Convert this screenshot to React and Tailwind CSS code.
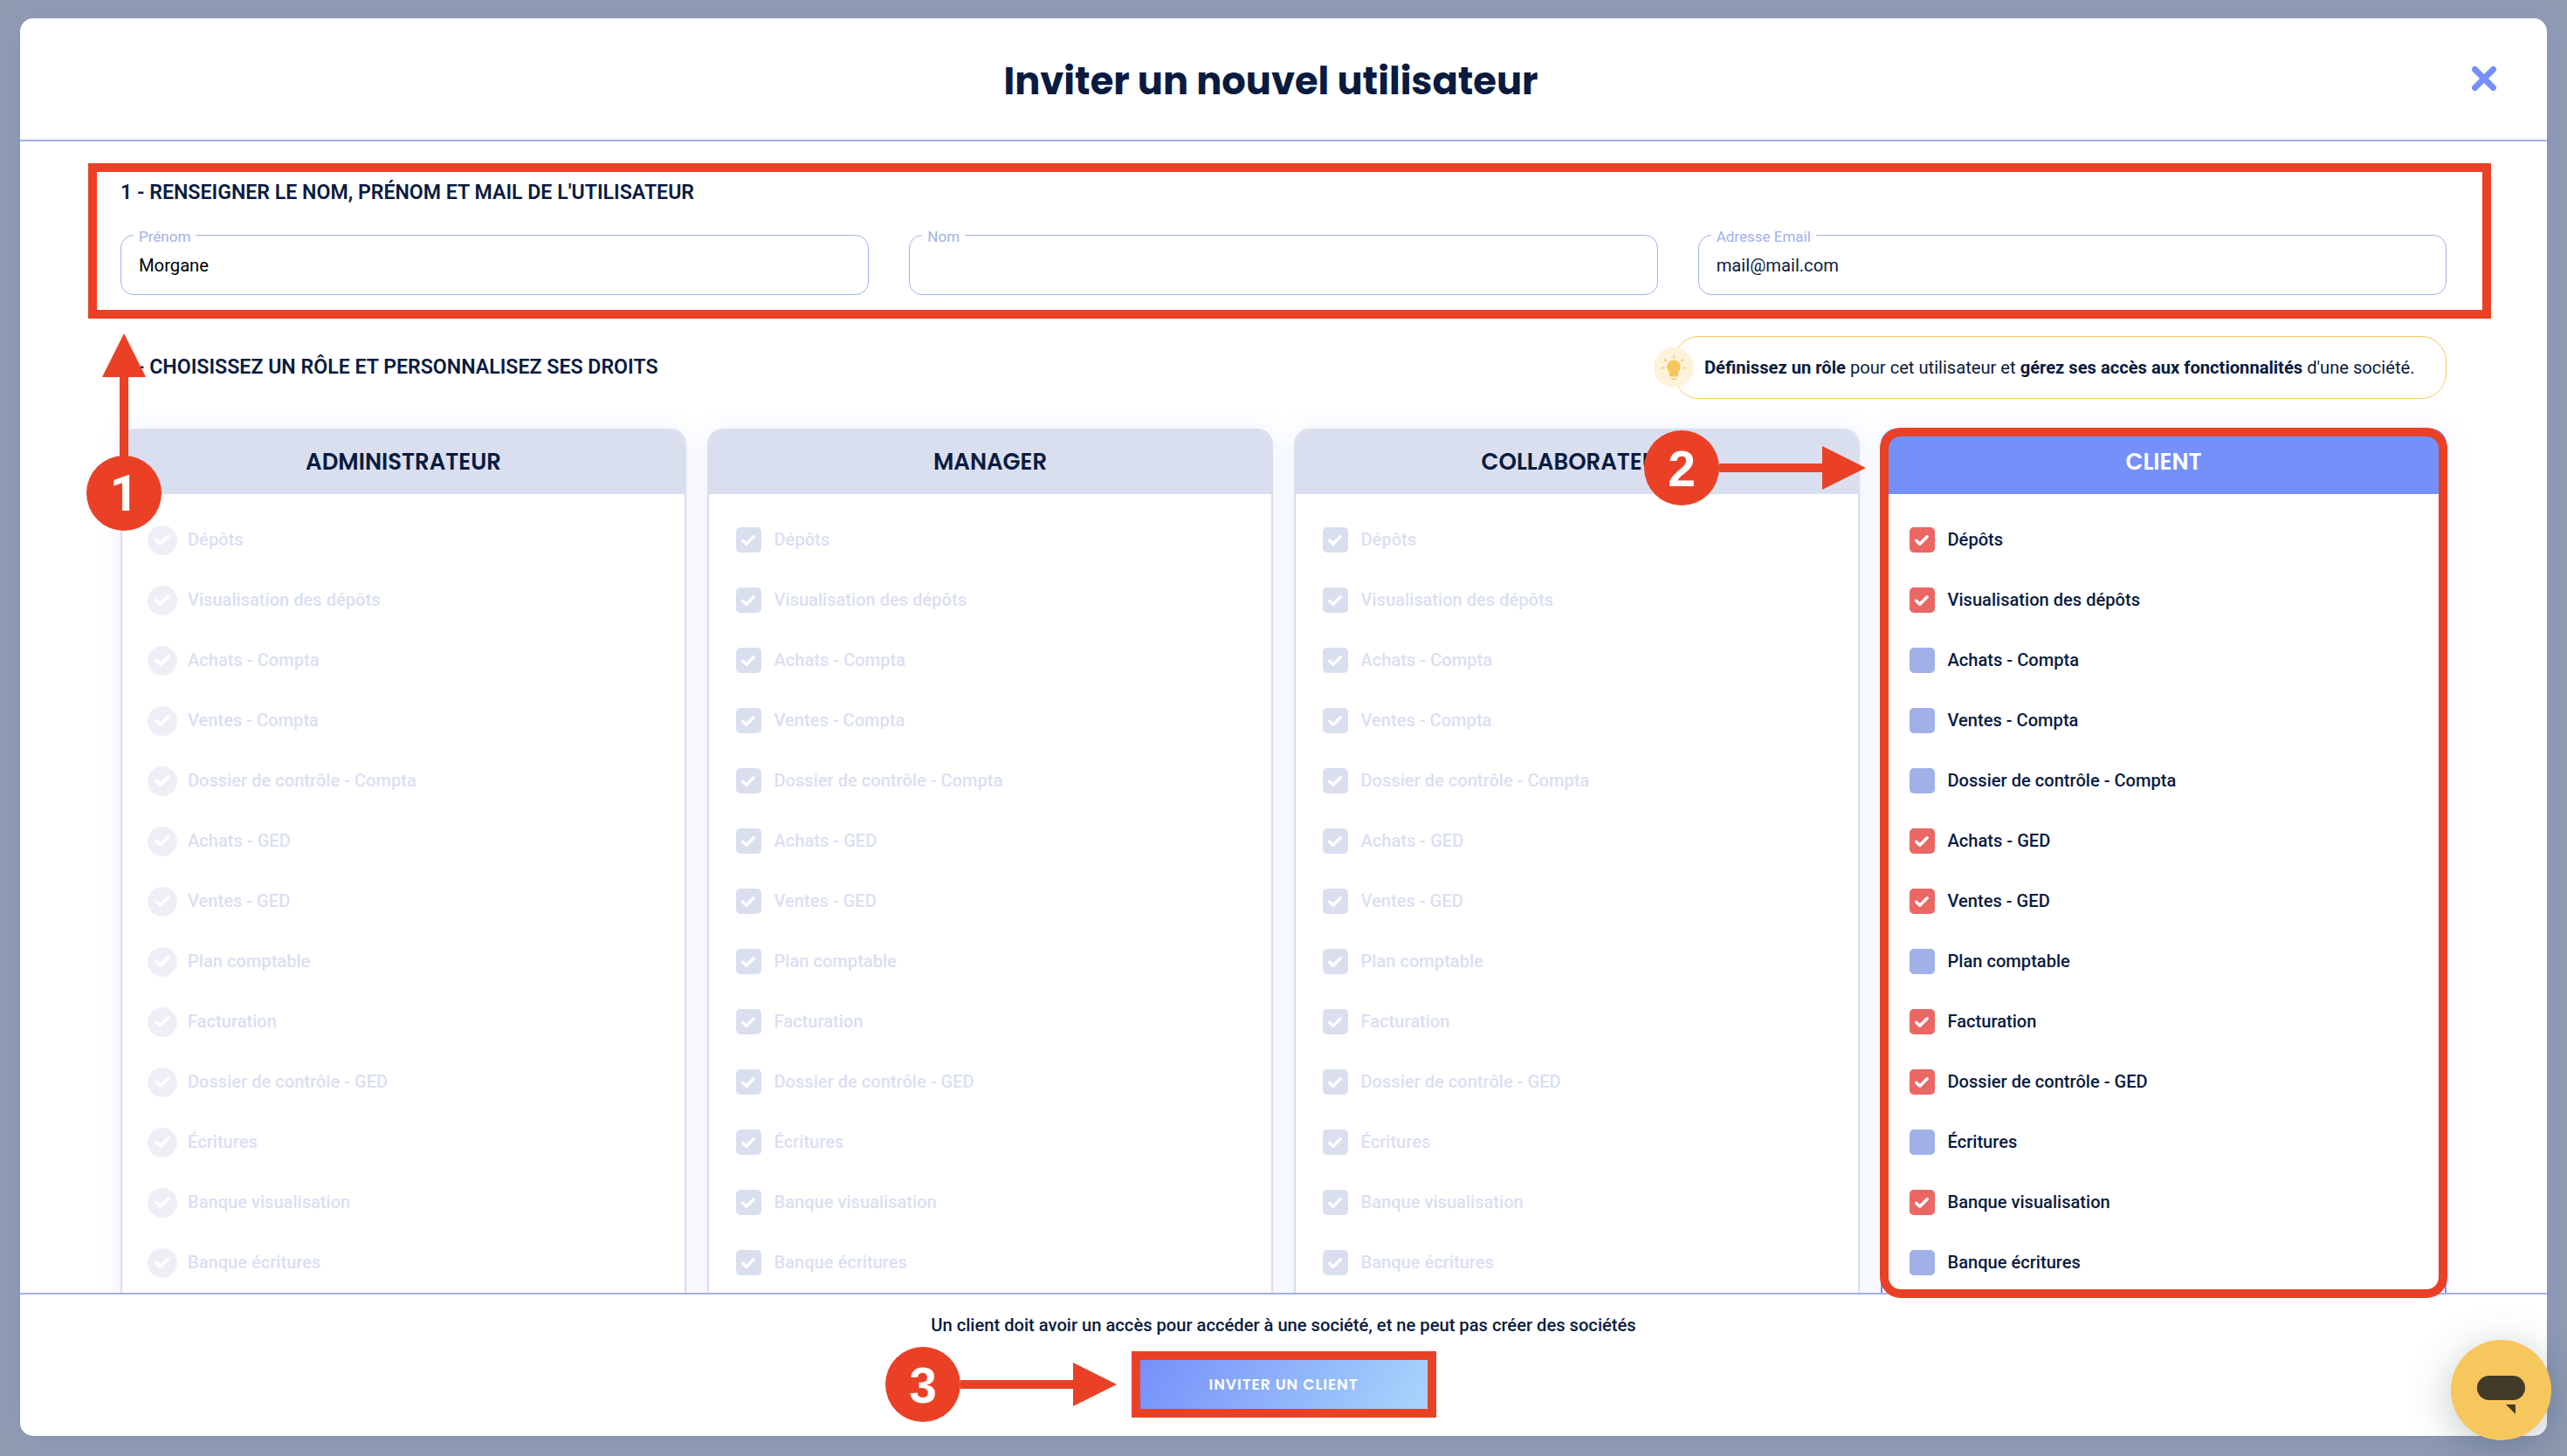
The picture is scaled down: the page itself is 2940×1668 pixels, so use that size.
import React from 'react';
import { clsx } from 'clsx';

const PERMISSIONS = [
    'Dépôts',
    'Visualisation des dépôts',
    'Achats - Compta',
    'Ventes - Compta',
    'Dossier de contrôle - Compta',
    'Achats - GED',
    'Ventes - GED',
    'Plan comptable',
    'Facturation',
    'Dossier de contrôle - GED',
    'Écritures',
    'Banque visualisation',
    'Banque écritures',
];

const CLIENT_GRANTED = [
    'Dépôts',
    'Visualisation des dépôts',
    'Achats - GED',
    'Ventes - GED',
    'Facturation',
    'Dossier de contrôle - GED',
    'Banque visualisation',
];

const ROLES = [
    { id: 'admin', label: 'ADMINISTRATEUR', round: true, granted: PERMISSIONS },
    { id: 'manager', label: 'MANAGER', granted: PERMISSIONS },
    { id: 'collab', label: 'COLLABORATEUR', granted: PERMISSIONS },
    { id: 'client', label: 'CLIENT', active: true, granted: CLIENT_GRANTED },
];

const FIELDS = [
    { id: 'firstname', label: 'Prénom', value: 'Morgane', color: 'text-black' },
    { id: 'lastname', label: 'Nom', value: '', color: 'text-[#0a1b40]' },
    { id: 'email', label: 'Adresse Email', value: 'mail@mail.com', color: 'text-[#0a1b40]' },
];

const Check = ({ className }) => (
    <svg viewBox="0 0 16 12" className={className} fill="none" stroke="#fff" strokeWidth="3.4" strokeLinecap="round" strokeLinejoin="round">
        <path d="M1.700 6.200 5.800 10.200 14.200 1.800" />
    </svg>
);

const Box = ({ round, active, checked }) => {
    if (round) {
        return (
            <span className="flex size-[34px] items-center justify-center rounded-full bg-[#eeeff6]">
                <Check className="h-[13px] w-[18px] overflow-visible" />
            </span>
        );
    }
    return (
        <span
            className={clsx(
                'flex size-[29px] items-center justify-center rounded-[5px]',
                !active && 'bg-[#dadfef]',
                active && checked && 'bg-[#ea6763]',
                active && !checked && 'bg-[#a0b1e8]'
            )}
        >
            {checked && <Check className="mr-px h-[12px] w-4 overflow-visible" />}
        </span>
    );
};

const RoleColumn = ({ role }) => (
    <div
        className={clsx(
            'h-[1100px] rounded-[18px] border-2 bg-white shadow-[0_0_28px_rgba(117,144,250,0.13)]',
            role.active ? 'border-[#7590fa]' : 'border-[#dadfef]'
        )}
    >
        <h3
            className={clsx(
                "flex h-[73px] items-center justify-center rounded-t-2xl pb-[2px] font-['Poppins','Inter',sans-serif] text-[26px] leading-none font-semibold",
                role.active ? 'bg-[#7590fa] text-white' : 'bg-[#dadfef] text-[#0a1b40]'
            )}
        >
            {role.label}
        </h3>
        <ul className="pt-[18px]">
            {PERMISSIONS.map((name) => (
                <li
                    key={name}
                    className={clsx(
                        'flex h-[69px] items-center text-[20.1px] font-medium',
                        role.round ? 'gap-3 pl-[29px]' : 'gap-[14.5px] pl-[31px]',
                        role.active ? 'text-[#0a1b40]' : 'text-[#dadff2]'
                    )}
                >
                    <Box round={role.round} active={role.active} checked={role.granted.includes(name)} />
                    {name}
                </li>
            ))}
        </ul>
    </div>
);

const Field = ({ label, value, color }) => (
    <div className="relative h-[69px] rounded-[15px] border border-[#a0b1e8] px-[20px]">
        <span className="absolute -top-[11px] left-3.5 bg-white px-[6px] text-[17px] leading-6 text-[#a0b1e8]">{label}</span>
        <span className={clsx('block text-[20.2px] leading-[68px]', color)}>{value}</span>
    </div>
);

const Bulb = () => (
    <span className="absolute top-[12px] -left-6 flex size-[46px] items-center justify-center rounded-full bg-[#fdf2da]">
        <svg viewBox="0 0 30 30" className="size-[30px]" fill="#f6c75c">
            <path d="M15 6.500a7.800 7.800 0 0 0-7.800 7.800c0 3 2 4.600 2.500 6.500l.6 4.600h9.400l.6-4.600c.5-1.900 2.500-3.500 2.500-6.500A7.800 7.800 0 0 0 15 6.500Z" />
            <rect x="12" y="27.500" width="6" height="1.600" rx=".8" />
            <path d="M15 1v3M4 5.500l2.500 2.500M26 5.500 23.500 8M1 15.500h3.500M25.500 15.500H29" stroke="#f6c75c" strokeWidth="1.500" />
        </svg>
    </span>
);

const Step = ({ n, className }) => (
    <span
        className={clsx(
            'flex size-[86px] items-center justify-center rounded-full bg-[#ea4126] text-[57px] leading-none font-bold text-white',
            className
        )}
    >
        {n}
    </span>
);

const ArrowRight = ({ length }) => (
    <svg width={length} height="50" fill="#ea4126" className="block">
        <rect x="0" y="20" width={length - 48} height="10" />
        <path d={`M${length - 50} 0 ${length} 25 ${length - 50} 50Z`} />
    </svg>
);

const App = () => (
    <div className="relative flex h-[1668px] w-[2940px] overflow-hidden bg-[#919bb1] pt-[21px] pr-[23px] pb-[23px] pl-[23px] font-['Roboto',sans-serif] text-[#0a1b40]">
        <div className="flex h-[1624px] flex-1 flex-col overflow-hidden rounded-[15px] bg-white shadow-[0_0_40px_rgba(130,145,200,0.5)]">
            <header className="flex h-[141px] shrink-0 items-center border-b-2 border-[#a0b1e8] pr-[57px] pl-[58px]">
                <h1 className="flex-1 pt-1.5 text-center font-['Poppins','Inter',sans-serif] text-[43.2px] leading-none font-bold">
                    Inviter un nouvel utilisateur
                </h1>
                <svg viewBox="0 0 30 30" className="mb-[2px] size-[30px]" stroke="#7590fa" strokeWidth="7" strokeLinecap="round">
                    <path d="M4.500 4.500 25.500 25.500M25.500 4.500 4.500 25.500" />
                </svg>
            </header>

            <main className="h-[1319px] shrink-0 overflow-hidden px-[115px] pt-[46px]">
                <h2 className="text-[23.15px] leading-[26px] font-semibold">1 - RENSEIGNER LE NOM, PRÉNOM ET MAIL DE L'UTILISATEUR</h2>
                <div className="mt-[35px] grid grid-cols-3 gap-[46px]">
                    {FIELDS.map((field) => (
                        <Field key={field.id} {...field} />
                    ))}
                </div>

                <div className="mt-[47px] flex h-[72px] items-center justify-between">
                    <h2 className="pb-px text-[23.15px] leading-[26px] font-semibold">2 - CHOISISSEZ UN RÔLE ET PERSONNALISEZ SES DROITS</h2>
                    <div className="relative flex h-[72px] w-[885px] items-center rounded-[29px] border border-[#f6c75c] pl-[34px] text-[20.15px] whitespace-nowrap">
                        <Bulb />
                        <p><b>Définissez un rôle</b> pour cet utilisateur et <b>gérez ses accès aux fonctionnalités</b> d'une société.</p>
                    </div>
                </div>

                <div className="mt-[34px] grid grid-cols-4 gap-6">
                    {ROLES.map((role) => (
                        <RoleColumn key={role.id} role={role} />
                    ))}
                </div>
            </main>

            <footer className="flex flex-1 flex-col items-center border-t-2 border-[#a0b1e8] pt-[22px]">
                <p className="text-[20.15px] leading-[26px] font-medium">Un client doit avoir un accès pour accéder à une société, et ne peut pas créer des sociétés</p>
                <button className="mt-[27px] flex h-[56px] w-[330px] items-center justify-center bg-linear-[120deg] from-[#7590fa] to-[#a9d5fb] pt-0.5 font-['Poppins','Inter',sans-serif] text-[17.2px] leading-none font-semibold tracking-[0.95px] text-white">
                    INVITER UN CLIENT
                </button>
            </footer>
        </div>

        {/* Highlight frames */}
        <div className="absolute top-[187px] left-[101px] h-[178px] w-[2752px] border-10 border-[#ea4126]" />
        <div className="absolute top-[490px] left-[2153px] h-[997px] w-[650px] rounded-[24px] border-10 border-[#ea4126]" />
        <div className="absolute top-[1548px] left-[1296px] h-[76px] w-[349px] border-10 border-[#ea4126]" />

        {/* Numbered steps */}
        <div className="absolute top-[382px] left-[99px] flex flex-col items-center">
            <svg width="50" height="142" fill="#ea4126" className="-mb-0.5 block">
                <path d="M25 0 50 50H0Z" />
                <rect x="20" y="48" width="10" height="94" />
            </svg>
            <Step n="1" className="font-['Roboto',sans-serif]" />
        </div>
        <div className="absolute top-[493px] left-[1883px] flex items-center">
            <Step n="2" className="pt-0.5 font-['Liberation_Sans',sans-serif]" />
            <ArrowRight length={168} />
        </div>
        <div className="absolute top-[1543px] left-[1014px] flex items-center">
            <Step n="3" className="pt-0.5 font-['Liberation_Sans',sans-serif]" />
            <ArrowRight length={179} />
        </div>

        {/* Chat launcher */}
        <div className="absolute top-[1535px] left-[2807px] size-[115px] rounded-full bg-[#f6c75c] shadow-[0_10px_50px_rgba(30,60,70,0.28)]">
            <svg viewBox="0 0 115 115" className="size-[115px]" fill="#433a28">
                <rect x="30" y="41" width="55" height="28" rx="14" />
                <path d="M63 74h11v11Z" />
            </svg>
        </div>
    </div>
);

export default App;
